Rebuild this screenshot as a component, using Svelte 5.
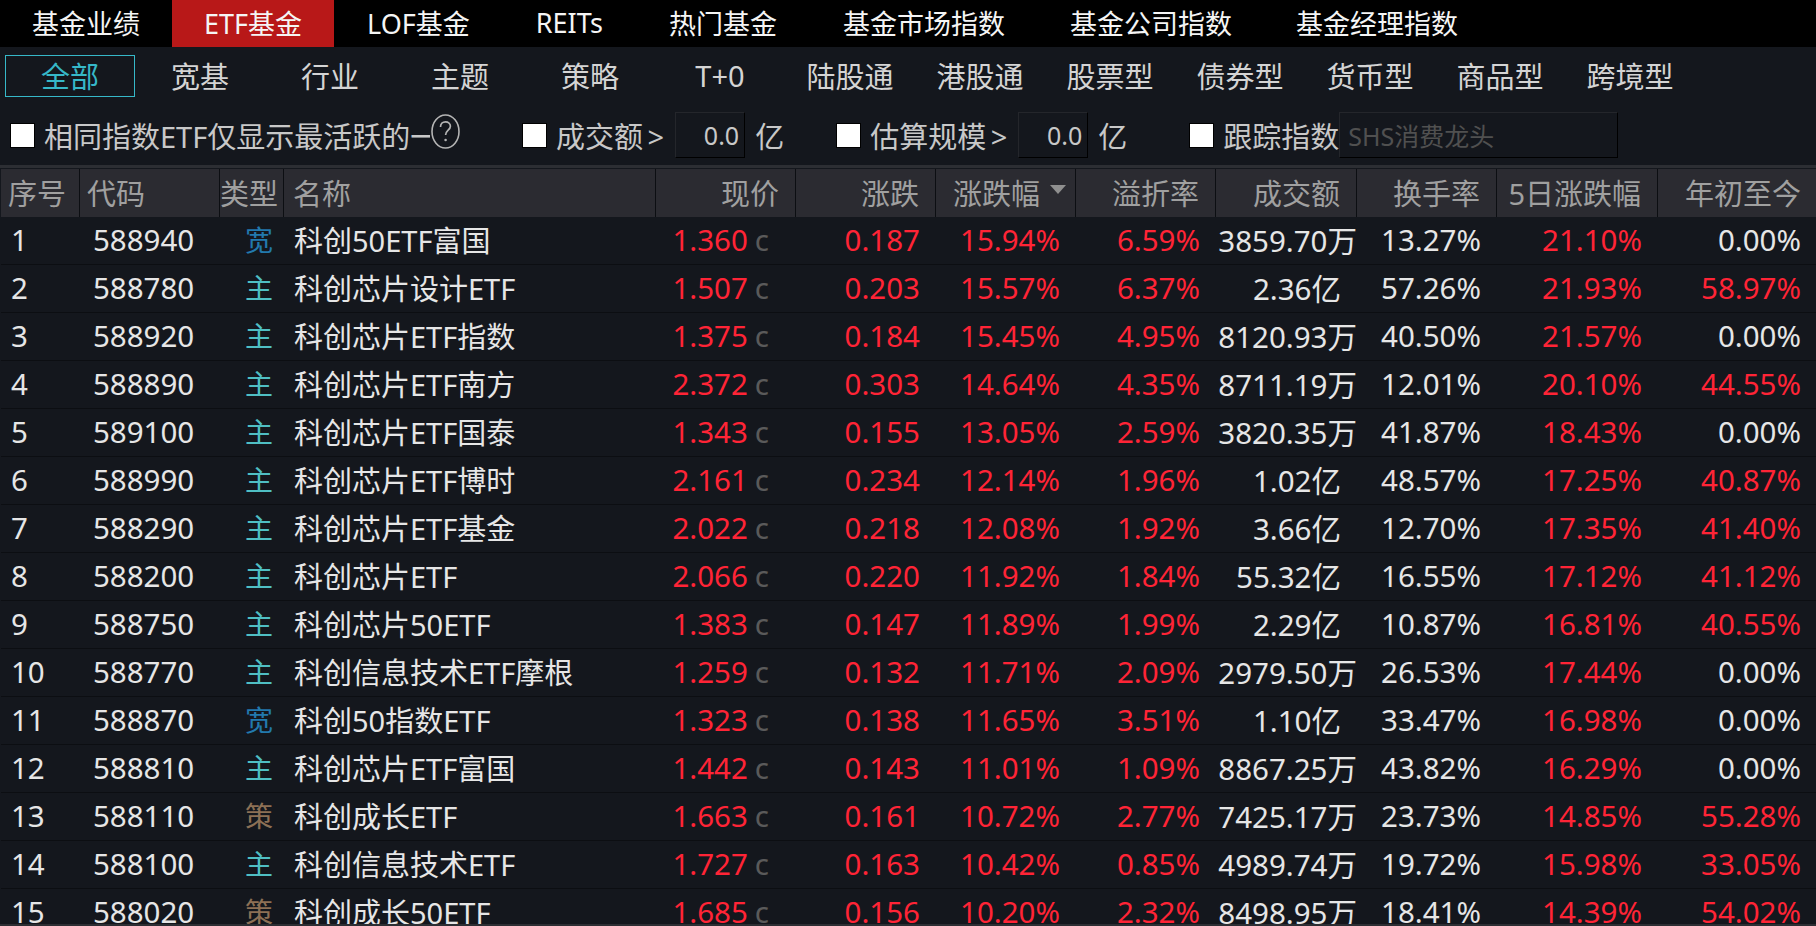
<script>
	const mainTabs = ['基金业绩', 'ETF基金', 'LOF基金', 'REITs', '热门基金', '基金市场指数', '基金公司指数', '基金经理指数'];
	const subTabs = ['全部', '宽基', '行业', '主题', '策略', 'T+0', '陆股通', '港股通', '股票型', '债券型', '货币型', '商品型', '跨境型'];

	const columns = [
		{ label: '序号', cls: 'c-no' },
		{ label: '代码', cls: 'c-code' },
		{ label: '类型', cls: 'c-type' },
		{ label: '名称', cls: 'c-name' },
		{ label: '现价', cls: 'c-num' },
		{ label: '涨跌', cls: 'c-num' },
		{ label: '涨跌幅', cls: 'c-num', sorted: true },
		{ label: '溢折率', cls: 'c-num' },
		{ label: '成交额', cls: 'c-num c-amount' },
		{ label: '换手率', cls: 'c-num' },
		{ label: '5日涨跌幅', cls: 'c-num c-five' },
		{ label: '年初至今', cls: 'c-num c-year' }
	];

	const rows = [
		['588940', '宽', '科创50ETF富国', '1.360', '0.187', '15.94%', '6.59%', '3859.70万', '13.27%', '21.10%', '0.00%'],
		['588780', '主', '科创芯片设计ETF', '1.507', '0.203', '15.57%', '6.37%', '2.36亿', '57.26%', '21.93%', '58.97%'],
		['588920', '主', '科创芯片ETF指数', '1.375', '0.184', '15.45%', '4.95%', '8120.93万', '40.50%', '21.57%', '0.00%'],
		['588890', '主', '科创芯片ETF南方', '2.372', '0.303', '14.64%', '4.35%', '8711.19万', '12.01%', '20.10%', '44.55%'],
		['589100', '主', '科创芯片ETF国泰', '1.343', '0.155', '13.05%', '2.59%', '3820.35万', '41.87%', '18.43%', '0.00%'],
		['588990', '主', '科创芯片ETF博时', '2.161', '0.234', '12.14%', '1.96%', '1.02亿', '48.57%', '17.25%', '40.87%'],
		['588290', '主', '科创芯片ETF基金', '2.022', '0.218', '12.08%', '1.92%', '3.66亿', '12.70%', '17.35%', '41.40%'],
		['588200', '主', '科创芯片ETF', '2.066', '0.220', '11.92%', '1.84%', '55.32亿', '16.55%', '17.12%', '41.12%'],
		['588750', '主', '科创芯片50ETF', '1.383', '0.147', '11.89%', '1.99%', '2.29亿', '10.87%', '16.81%', '40.55%'],
		['588770', '主', '科创信息技术ETF摩根', '1.259', '0.132', '11.71%', '2.09%', '2979.50万', '26.53%', '17.44%', '0.00%'],
		['588870', '宽', '科创50指数ETF', '1.323', '0.138', '11.65%', '3.51%', '1.10亿', '33.47%', '16.98%', '0.00%'],
		['588810', '主', '科创芯片ETF富国', '1.442', '0.143', '11.01%', '1.09%', '8867.25万', '43.82%', '16.29%', '0.00%'],
		['588110', '策', '科创成长ETF', '1.663', '0.161', '10.72%', '2.77%', '7425.17万', '23.73%', '14.85%', '55.28%'],
		['588100', '主', '科创信息技术ETF', '1.727', '0.163', '10.42%', '0.85%', '4989.74万', '19.72%', '15.98%', '33.05%'],
		['588020', '策', '科创成长50ETF', '1.685', '0.156', '10.20%', '2.32%', '8498.95万', '18.41%', '14.39%', '54.02%']
	];

	const typeClass = { 宽: 't-broad', 主: 't-theme', 策: 't-strategy' };
	const isZero = (v) => v === '0.00%';
</script>

<div class="page">
	<nav class="main-tabs">
		{#each mainTabs as tab, i}
			<div class="main-tab" class:active={i === 1} class:wide={i >= 2 && i <= 5}>{tab}</div>
		{/each}
	</nav>

	<div class="sub-tabs">
		{#each subTabs as tab, i}
			<div class="sub-tab" class:active={i === 0}>{tab}</div>
		{/each}
	</div>

	<div class="filters">
		<span class="check"></span>
		<span class="label clipped">相同指数ETF仅显示最活跃的一</span>
		<svg class="help" viewBox="0 0 29 35" width="29" height="35" aria-hidden="true">
			<ellipse cx="14.5" cy="17.5" rx="13.5" ry="16.5" fill="none" stroke="#b4b4b4" stroke-width="1.6" />
			<path d="M9.5 13c0-3.2 2.2-5.2 5-5.2s4.9 1.8 4.9 4.4c0 3.9-4.8 4.2-4.8 8.8" fill="none" stroke="#b4b4b4" stroke-width="1.7" />
			<circle cx="14.6" cy="26" r="1.3" fill="#b4b4b4" />
		</svg>
		<span class="check gap-a"></span>
		<span class="label tight">成交额 &gt;</span>
		<span class="field num">0.0</span>
		<span class="label unit">亿</span>
		<span class="check gap-b"></span>
		<span class="label tight">估算规模 &gt;</span>
		<span class="field num">0.0</span>
		<span class="label unit">亿</span>
		<span class="check gap-c"></span>
		<span class="label">跟踪指数</span>
		<span class="field search">SHS消费龙头</span>
	</div>

	<div class="rule"></div>

	<div class="table">
		<div class="row head">
			{#each columns as col}
				<div class="cell {col.cls}">
					{col.label}{#if col.sorted}<span class="sort"></span>{/if}
				</div>
			{/each}
		</div>
		{#each rows as r, i}
			<div class="row">
				<div class="cell c-no data-no">{i + 1}</div>
				<div class="cell c-code data-code">{r[0]}</div>
				<div class="cell c-type data-type {typeClass[r[1]]}">{r[1]}</div>
				<div class="cell c-name data-name">{r[2]}</div>
				<div class="cell c-num up price">{r[3]}<span class="flag">c</span></div>
				<div class="cell c-num up">{r[4]}</div>
				<div class="cell c-num up">{r[5]}</div>
				<div class="cell c-num up">{r[6]}</div>
				<div class="cell c-num c-amount" class:wan={r[7].endsWith('万')}>{r[7]}</div>
				<div class="cell c-num">{r[8]}</div>
				<div class="cell c-num c-five up">{r[9]}</div>
				<div class="cell c-num c-year" class:up={!isZero(r[10])}>{r[10]}</div>
			</div>
		{/each}
	</div>
</div>

<style>
	:global(body) {
		background: #14171d;
		overflow: hidden;
	}

	.page {
		height: 926px;
		overflow: hidden;
		background: #14171d;
		color: #e6e6e6;
		font-family: 'Noto Sans', 'Noto Sans CJK SC', sans-serif;
		font-size: 29px;
		white-space: nowrap;
		border-bottom: 2px solid #2c2e33;
		box-sizing: border-box;
	}

	.main-tabs {
		display: flex;
		height: 47px;
		background: #000;
		font-size: 27px;
	}

	.main-tab {
		display: flex;
		align-items: center;
		padding: 0 32px 2px;
		color: #f5f5f5;
	}

	.main-tab.wide {
		padding: 0 33px 2px;
	}

	.main-tab.active {
		background: #b81818;
	}

	.sub-tabs {
		display: flex;
		padding: 8px 0 0 5px;
	}

	.sub-tab {
		width: 130px;
		height: 42px;
		box-sizing: border-box;
		display: flex;
		align-items: center;
		justify-content: center;
		padding-bottom: 2px;
		color: #d4d4d4;
	}

	.sub-tab.active {
		border: 1px solid #36b8c8;
		color: #36b8c8;
	}

	.filters {
		display: flex;
		align-items: center;
		height: 46px;
		margin-top: 15px;
		padding-left: 10px;
		color: #c8c8c8;
	}

	.check {
		width: 25px;
		height: 25px;
		box-sizing: border-box;
		background: #fff;
		border: 1px solid #000;
		flex-shrink: 0;
		margin-right: 9px;
	}

	.clipped {
		width: 386px;
		overflow: hidden;
		flex-shrink: 0;
	}

	.tight {
		word-spacing: -3px;
	}

	.gap-a {
		margin-left: 62px;
	}

	.gap-b {
		margin-left: 52px;
	}

	.gap-c {
		margin-left: 62px;
	}

	.help {
		margin: -7px 0 0 1px;
		flex-shrink: 0;
	}

	.field {
		height: 46px;
		box-sizing: border-box;
		background: #14171d;
		border: 1px solid #000;
		border-left-color: #24262b;
		border-top-color: #24262b;
		display: flex;
		align-items: center;
	}

	.field.num {
		width: 70px;
		margin-left: 11px;
		justify-content: flex-end;
		padding-right: 5px;
		font-size: 25px;
	}

	.field.search {
		width: 279px;
		padding-left: 8px;
		color: #505050;
		font-size: 25px;
	}

	.unit {
		margin-left: 10px;
	}

	.rule {
		height: 3px;
		margin-top: 7px;
		background: #2c2e33;
	}

	.table {
		margin-top: 1px;
		padding-left: 1px;
	}

	.row {
		display: flex;
		height: 48px;
		box-sizing: border-box;
		border-bottom: 1px solid #0c0e12;
	}

	.row.head {
		background: #2b2b31;
		color: #a0a0a0;
		border-bottom: 0;
	}

	.cell {
		display: flex;
		align-items: center;
		box-sizing: border-box;
		flex-shrink: 0;
		height: 100%;
		padding-bottom: 3px;
	}

	.c-num {
		font-size: 29.5px;
	}

	.head .cell {
		border-right: 1px solid #0c0e12;
		font-size: 29px;
	}

	.head .cell:last-child {
		border-right: 0;
	}

	.c-no {
		width: 79px;
		padding-left: 7px;
	}

	.c-code {
		width: 140px;
		padding-left: 7px;
	}

	.c-type {
		width: 64px;
		padding-left: 0;
	}

	.c-name {
		width: 372px;
		padding-left: 9px;
	}

	.c-num {
		width: 140px;
		justify-content: flex-end;
		padding-right: 16px;
	}

	.c-amount {
		width: 141px;
	}

	.c-five {
		width: 161px;
	}

	.c-year {
		flex: 1;
		width: auto;
		padding-right: 15px;
	}

	.data-no {
		padding-left: 10px;
		font-size: 29.5px;
	}

	.data-code {
		padding-left: 13px;
		font-size: 29.5px;
	}

	.data-type {
		padding-left: 25px;
		font-size: 28px;
	}

	.data-name {
		padding-left: 10px;
	}

	.wan {
		padding-right: 0;
	}

	.price {
		padding-right: 27px;
	}

	.flag {
		color: #5a5a5a;
		margin-left: 7px;
	}

	.up {
		color: #ff2436;
	}

	.t-broad {
		color: #2279ad;
	}

	.t-theme {
		color: #4fbfc4;
	}

	.t-strategy {
		color: #8c7055;
	}

	.sort {
		width: 0;
		height: 0;
		margin: -5px -7px 0 10px;
		border-left: 8px solid transparent;
		border-right: 8px solid transparent;
		border-top: 9px solid #8f8f8f;
	}
</style>
